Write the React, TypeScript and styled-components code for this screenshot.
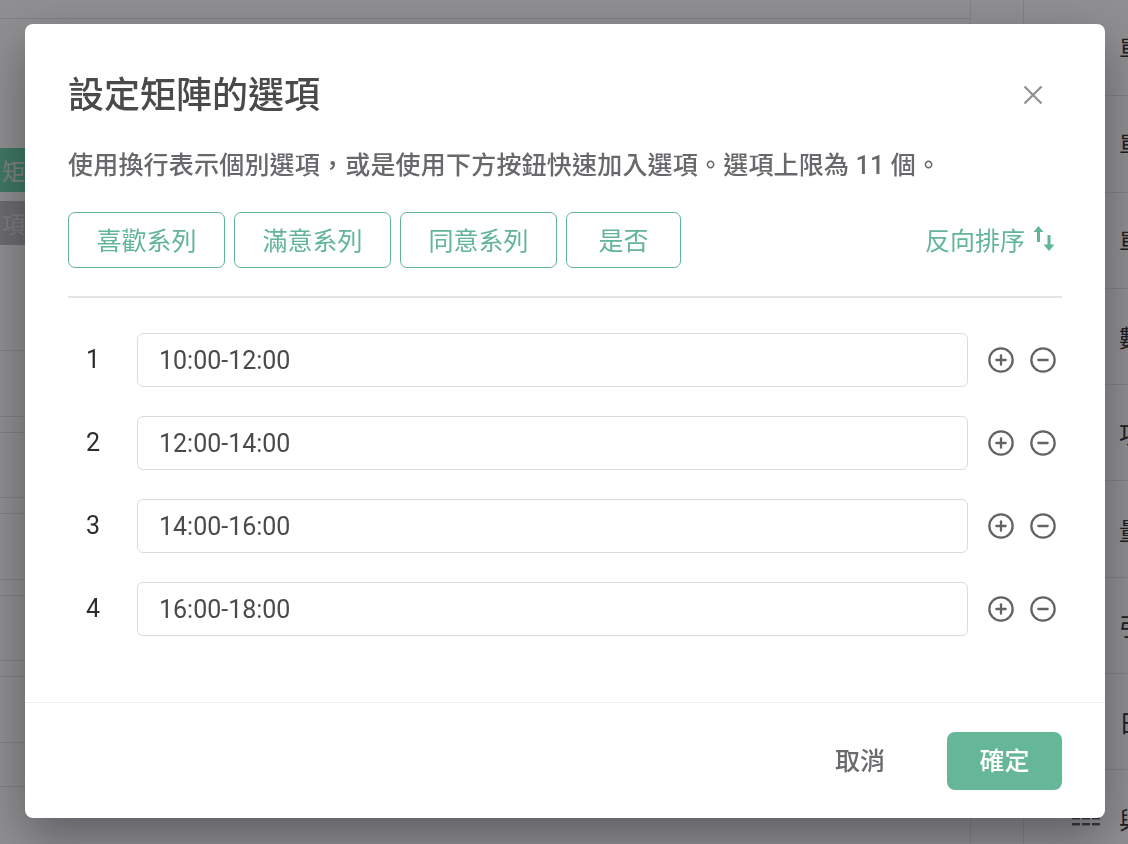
import React from 'react';
import styled, { createGlobalStyle } from 'styled-components';
import { CirclePlus, CircleMinus } from 'lucide-react';

const fontStack = `Roboto, "Noto Sans CJK TC", "Noto Sans", sans-serif`;

const GlobalStyle = createGlobalStyle`
  html, body {
    margin: 0;
    height: 100%;
    background: #fff;
    overflow: hidden;
    font-family: ${fontStack};
  }
`;

/* page behind the dialog */
const Page = styled.div`
  display: grid;
  grid-template-columns: 971px 53px 1fr;
  width: 1128px;
  height: 844px;
  overflow: hidden;
  background: #fff;
`;

const Editor = styled.div`
  display: flex;
  flex-direction: column;
  border-right: 1px solid #e6e6e6;
`;

const TopBar = styled.div`
  height: 18px;
  border-bottom: 1px solid #e3e3e3;
  margin-bottom: 129px;
`;

const Chip = styled.div<{ $tone: 'green' | 'grey' }>`
  width: 60px;
  height: 44px;
  margin-bottom: 9px;
  padding-left: 2px;
  display: flex;
  align-items: center;
  font-size: 23px;
  color: ${p => (p.$tone === 'green' ? '#dfe9e4' : '#dcdcdc')};
  background: ${p => (p.$tone === 'green' ? '#5fd2a4' : '#bababc')};
`;

const QuestionList = styled.div`
  margin-top: 96px;
  display: flex;
  flex-direction: column;
  gap: 15px;
`;

const QuestionRow = styled.div`
  box-sizing: border-box;
  height: 66.5px;
  border-top: 1px solid #e3e3e3;
  border-bottom: 1px solid #e3e3e3;
`;

const ListEnd = styled.div`
  margin-top: 28px;
  border-top: 1px solid #e3e3e3;
`;

const Gutter = styled.div`
  border-right: 1px solid #e3e3e3;
`;

const Palette = styled.div`
  display: flex;
  flex-direction: column;
`;

const PaletteRow = styled.div`
  flex: 0 0 96.3px;
  box-sizing: border-box;
  display: flex;
  align-items: center;
  gap: 19px;
  padding-left: 48px;
  border-bottom: 1px solid #e3e3e3;
  font-size: 24px;
  color: #222;
  white-space: nowrap;
`;

const GripIcon = () => (
  <svg width="28" height="16" viewBox="0 0 28 16" fill="#555">
    {[1, 7, 13].map(y => (
      <g key={y}>
        <rect x="0" y={y} width="8" height="2.4" />
        <rect x="10" y={y} width="8" height="2.4" />
        <rect x="20" y={y} width="8" height="2.4" />
      </g>
    ))}
  </svg>
);

/* dialog */
const Overlay = styled.div`
  position: fixed;
  inset: 0;
  display: flex;
  align-items: flex-start;
  justify-content: flex-start;
  padding: 24px 0 0 25px;
  background: rgba(28, 26, 32, 0.49);
`;

const Modal = styled.div`
  width: 1080px;
  height: 794px;
  display: flex;
  flex-direction: column;
  background: #fff;
  border-radius: 8px;
  box-shadow: 0 18px 50px rgba(0, 0, 0, 0.36);
  color: #4a4a4d;
`;

const Body = styled.div`
  flex: 1;
  padding: 44px 43px 0;
  display: flex;
  flex-direction: column;
`;

const TitleRow = styled.div`
  display: flex;
  align-items: center;
  justify-content: space-between;
  height: 54px;
`;

const Title = styled.h2`
  margin: 1px 0 0;
  font-size: 36px;
  font-weight: 500;
  line-height: 54px;
  color: #4a4a4d;
`;

const CloseButton = styled.button`
  display: flex;
  border: 0;
  padding: 0;
  margin-right: 19px;
  background: none;
`;

const Description = styled.p`
  margin: 25px 0 0;
  font-size: 25px;
  font-weight: 500;
  letter-spacing: 0.2px;
  line-height: 38px;
  color: #68686c;
`;

const PresetRow = styled.div`
  margin-top: 27px;
  display: flex;
  align-items: center;
  gap: 9px;
  padding-bottom: 28px;
  border-bottom: 2px solid #e4e3e7;
`;

const PresetButton = styled.button<{ $narrow?: boolean }>`
  box-sizing: border-box;
  width: ${p => (p.$narrow ? '115px' : '157px')};
  height: 56px;
  padding: 0 0 3px;
  border: 1.5px solid #62b596;
  border-radius: 7px;
  background: #fff;
  color: #62b596;
  font-family: ${fontStack};
  font-size: 25px;
`;

const ReverseButton = styled.button`
  margin-left: auto;
  margin-right: 7px;
  display: flex;
  align-items: center;
  gap: 8px;
  border: 0;
  padding: 0 0 3px;
  background: none;
  color: #62b596;
  font-family: ${fontStack};
  font-size: 25px;
`;

const OptionList = styled.div`
  margin-top: 35px;
  display: flex;
  flex-direction: column;
  gap: 29px;
`;

const OptionRow = styled.div`
  display: flex;
  align-items: center;
  height: 54px;
`;

const OptionIndex = styled.div`
  width: 69px;
  padding-left: 18px;
  box-sizing: border-box;
  margin-top: -2px;
  font-size: 25px;
  color: #2c2c2f;
`;

const OptionField = styled.div`
  box-sizing: border-box;
  width: 831px;
  height: 54px;
  padding: 1px 0 0 21px;
  display: flex;
  align-items: center;
  border: 1px solid #dcdbdf;
  border-radius: 6px;
  font-size: 25px;
  color: #4a4a4d;
`;

const RowActions = styled.div`
  margin-left: 19px;
  display: flex;
  gap: 14px;
  color: #636366;
`;

const Footer = styled.div`
  height: 116px;
  box-sizing: border-box;
  padding: 29px 43px 0 0;
  display: flex;
  justify-content: flex-end;
  align-items: flex-start;
  gap: 62px;
  border-top: 1px solid #f0eff2;
`;

const CancelButton = styled.button`
  height: 58px;
  padding: 0 0 4px;
  border: 0;
  background: none;
  color: #6a6a6e;
  font-family: ${fontStack};
  font-size: 25px;
  font-weight: 500;
`;

const ConfirmButton = styled.button`
  width: 115px;
  height: 58px;
  padding: 0 0 4px;
  border: 0;
  border-radius: 8px;
  background: #65b797;
  color: #fff;
  font-family: ${fontStack};
  font-size: 25px;
  font-weight: 500;
`;

const CloseIcon = () => (
  <svg width="20" height="20" viewBox="0 0 20 20" fill="none" stroke="#8f8f91" strokeWidth="2.2">
    <path d="M1.5 1.5 18.5 18.5M18.5 1.5 1.5 18.5" />
  </svg>
);

const SortIcon = () => (
  <svg width="22" height="25" viewBox="0 0 22 25" fill="currentColor">
    <path d="M5.5 0 10.5 6H7V16H4V6H0.5Z" />
    <path d="M16 25 10.5 18.5H14.5V9H17.5V18.5H21.5Z" />
  </svg>
);

const presets = ['喜歡系列', '滿意系列', '同意系列', '是否'];
const options = ['10:00-12:00', '12:00-14:00', '14:00-16:00', '16:00-18:00'];
const paletteLabels = ['單選題', '單選題', '單選題', '數字', '項目', '量表', '引言', '日期', '與'];

export default function App() {
  return (
    <>
      <GlobalStyle />
      <Page>
        <Editor>
          <TopBar />
          <Chip $tone="green">矩</Chip>
          <Chip $tone="grey">項</Chip>
          <QuestionList>
            {[0, 1, 2, 3, 4].map(i => (
              <QuestionRow key={i} />
            ))}
            <ListEnd />
          </QuestionList>
        </Editor>
        <Gutter />
        <Palette>
          {paletteLabels.map((label, i) => (
            <PaletteRow key={i}>
              <GripIcon />
              {label}
            </PaletteRow>
          ))}
        </Palette>
      </Page>
      <Overlay>
        <Modal>
          <Body>
            <TitleRow>
              <Title>設定矩陣的選項</Title>
              <CloseButton aria-label="close">
                <CloseIcon />
              </CloseButton>
            </TitleRow>
            <Description>使用換行表示個別選項，或是使用下方按鈕快速加入選項。選項上限為 11 個。</Description>
            <PresetRow>
              {presets.map(label => (
                <PresetButton key={label} $narrow={label === '是否'}>
                  {label}
                </PresetButton>
              ))}
              <ReverseButton>
                反向排序
                <SortIcon />
              </ReverseButton>
            </PresetRow>
            <OptionList>
              {options.map((value, i) => (
                <OptionRow key={value}>
                  <OptionIndex>{i + 1}</OptionIndex>
                  <OptionField>{value}</OptionField>
                  <RowActions>
                    <CirclePlus size={28} strokeWidth={1.95} />
                    <CircleMinus size={28} strokeWidth={1.95} />
                  </RowActions>
                </OptionRow>
              ))}
            </OptionList>
          </Body>
          <Footer>
            <CancelButton>取消</CancelButton>
            <ConfirmButton>確定</ConfirmButton>
          </Footer>
        </Modal>
      </Overlay>
    </>
  );
}
